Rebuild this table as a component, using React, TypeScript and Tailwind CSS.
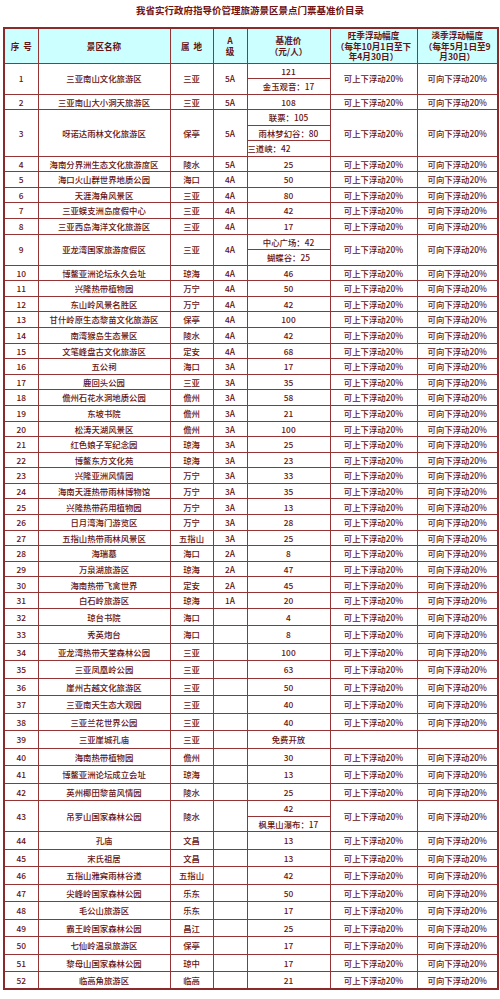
type Spot = {
  name: string;
  area: string;
  level: string;
  price: string | string[];
  free?: boolean;
};

const spots: Spot[] = [
  { name: "三亚南山文化旅游区", area: "三亚", level: "5A", price: ["121", "金玉观音：17"] },
  { name: "三亚南山大小洞天旅游区", area: "三亚", level: "5A", price: "108" },
  { name: "呀诺达雨林文化旅游区", area: "保亭", level: "5A", price: ["联票：105", "雨林梦幻谷：80", "三道峡：42"] },
  { name: "海南分界洲生态文化旅游度区", area: "陵水", level: "5A", price: "25" },
  { name: "海口火山群世界地质公园", area: "海口", level: "4A", price: "50" },
  { name: "天涯海角风景区", area: "三亚", level: "4A", price: "80" },
  { name: "三亚蜈支洲岛度假中心", area: "三亚", level: "4A", price: "42" },
  { name: "三亚西岛海洋文化旅游区", area: "三亚", level: "4A", price: "17" },
  { name: "亚龙湾国家旅游度假区", area: "三亚", level: "4A", price: ["中心广场：42", "蝴蝶谷：25"] },
  { name: "博鳌亚洲论坛永久会址", area: "琼海", level: "4A", price: "46" },
  { name: "兴隆热带植物园", area: "万宁", level: "4A", price: "50" },
  { name: "东山岭风景名胜区", area: "万宁", level: "4A", price: "42" },
  { name: "甘什岭原生态黎苗文化旅游区", area: "保亭", level: "4A", price: "100" },
  { name: "南湾猴岛生态景区", area: "陵水", level: "4A", price: "42" },
  { name: "文笔峰盘古文化旅游区", area: "定安", level: "4A", price: "68" },
  { name: "五公祠", area: "海口", level: "3A", price: "17" },
  { name: "鹿回头公园", area: "三亚", level: "3A", price: "35" },
  { name: "儋州石花水洞地质公园", area: "儋州", level: "3A", price: "58" },
  { name: "东坡书院", area: "儋州", level: "3A", price: "21" },
  { name: "松涛天湖风景区", area: "儋州", level: "3A", price: "100" },
  { name: "红色娘子军纪念园", area: "琼海", level: "3A", price: "25" },
  { name: "博鳌东方文化苑", area: "琼海", level: "3A", price: "23" },
  { name: "兴隆亚洲风情园", area: "万宁", level: "3A", price: "33" },
  { name: "海南天涯热带雨林博物馆", area: "万宁", level: "3A", price: "35" },
  { name: "兴隆热带药用植物园", area: "万宁", level: "3A", price: "13" },
  { name: "日月湾海门游览区", area: "万宁", level: "3A", price: "28" },
  { name: "五指山热带雨林风景区", area: "五指山", level: "3A", price: "25" },
  { name: "海瑞墓", area: "海口", level: "2A", price: "8" },
  { name: "万泉湖旅游区", area: "琼海", level: "2A", price: "47" },
  { name: "海南热带飞禽世界", area: "定安", level: "2A", price: "45" },
  { name: "白石岭旅游区", area: "琼海", level: "1A", price: "20" },
  { name: "琼台书院", area: "海口", level: "", price: "4" },
  { name: "秀英炮台", area: "海口", level: "", price: "8" },
  { name: "亚龙湾热带天堂森林公园", area: "三亚", level: "", price: "100" },
  { name: "三亚凤凰岭公园", area: "三亚", level: "", price: "63" },
  { name: "崖州古越文化旅游区", area: "三亚", level: "", price: "50" },
  { name: "三亚南天生态大观园", area: "三亚", level: "", price: "40" },
  { name: "三亚兰花世界公园", area: "三亚", level: "", price: "40" },
  { name: "三亚崖城孔庙", area: "三亚", level: "", price: "免费开放", free: true },
  { name: "海南热带植物园", area: "儋州", level: "", price: "30" },
  { name: "博鳌亚洲论坛成立会址", area: "琼海", level: "", price: "13" },
  { name: "英州椰田黎苗风情园", area: "陵水", level: "", price: "25" },
  { name: "吊罗山国家森林公园", area: "陵水", level: "", price: ["42", "枫果山瀑布：17"] },
  { name: "孔庙", area: "文昌", level: "", price: "13" },
  { name: "宋氏祖居", area: "文昌", level: "", price: "13" },
  { name: "五指山雅宾雨林谷道", area: "五指山", level: "", price: "42" },
  { name: "尖峰岭国家森林公园", area: "乐东", level: "", price: "50" },
  { name: "毛公山旅游区", area: "乐东", level: "", price: "17" },
  { name: "霸王岭国家森林公园", area: "昌江", level: "", price: "25" },
  { name: "七仙岭温泉旅游区", area: "保亭", level: "", price: "17" },
  { name: "黎母山国家森林公园", area: "琼中", level: "", price: "17" },
  { name: "临高角旅游区", area: "临高", level: "", price: "21" },
];

const cell = "border border-[#943434] p-0 text-center align-middle";

export default function App() {
  const body: React.ReactNode[] = [];

  spots.forEach((s, i) => {
    const no = i + 1;
    const prices = Array.isArray(s.price) ? s.price : [s.price];
    const n = prices.length;
    // 多票价的行按小格排，普通行前 31 行较矮
    const h = n > 1 ? "h-[15.5px]" : no <= 31 ? "h-[15.6px]" : "h-[17.5px]";

    prices.forEach((p, j) => {
      body.push(
        <tr key={`${no}-${j}`} className={h}>
          {j === 0 && (
            <>
              <td rowSpan={n} className={cell}>{no}</td>
              <td rowSpan={n} className={cell}>{s.name}</td>
              <td rowSpan={n} className={cell}>{s.area}</td>
              <td rowSpan={n} className={cell}>{s.level}</td>
            </>
          )}
          <td className={`${cell} ${p === "三道峡：42" ? "!text-left" : ""}`}>{p}</td>
          {j === 0 && (
            <>
              <td rowSpan={n} className={cell}>{s.free ? "" : "可上下浮动20%"}</td>
              <td rowSpan={n} className={cell}>{s.free ? "" : "可向下浮动20%"}</td>
            </>
          )}
        </tr>
      );
    });
  });

  return (
    <div className="w-[500px] bg-white font-['Noto_Sans_CJK_SC',sans-serif] text-[#661212]">
      {/* 标题 */}
      <div className="h-[27px] pt-[3px] text-center text-[9.5px] font-bold leading-[14px] text-[#701010]">
        我省实行政府指导价管理旅游景区景点门票基准价目录
      </div>

      <table className="ml-[3px] w-[494px] table-fixed border-collapse border-2 border-[#8b2a2a] text-[8.4px] font-medium leading-none">
        <colgroup>
          <col className="w-[34px]" />
          <col className="w-[132px]" />
          <col className="w-[43px]" />
          <col className="w-[34px]" />
          <col className="w-[83px]" />
          <col className="w-[87px]" />
          <col className="w-[81px]" />
        </colgroup>
        <thead>
          <tr className="h-[35px] bg-[#ccffff] text-[8.6px] font-bold leading-[10.5px]">
            <th className={cell}>序&nbsp;&nbsp;号</th>
            <th className={cell}>景区名称</th>
            <th className={cell}>属&nbsp;&nbsp;地</th>
            <th className={cell}>
              A
              <br />级
            </th>
            <th className={cell}>
              基准价
              <br />（元/人）
            </th>
            <th className={cell}>
              旺季浮动幅度
              <br />（每年10月1日至下
              <br />年4月30日）
            </th>
            <th className={cell}>
              淡季浮动幅度
              <br />（每年5月1日至9
              <br />月30日）
            </th>
          </tr>
        </thead>
        <tbody>{body}</tbody>
      </table>
    </div>
  );
}
